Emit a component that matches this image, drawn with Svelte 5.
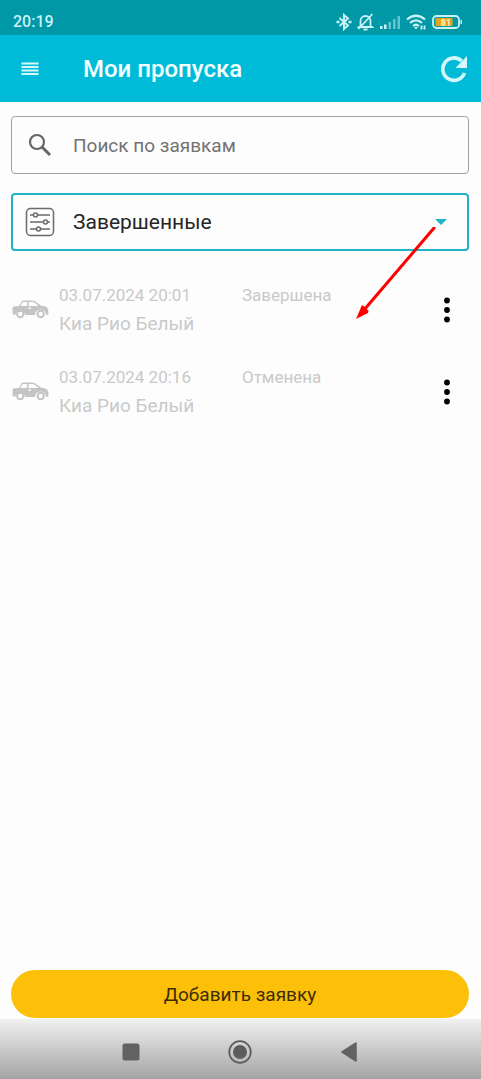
<script lang="ts">
  interface Pass {
    id: number;
    date: string;
    car: string;
    status: string;
  }

  const passes: Pass[] = [
    { id: 1, date: '03.07.2024 20:01', car: 'Киа Рио Белый', status: 'Завершена' },
    { id: 2, date: '03.07.2024 20:16', car: 'Киа Рио Белый', status: 'Отменена' },
  ];

  let query = $state('');
  let filter = $state('done');
</script>

<div class="screen">
  <div class="status-bar">
    <span class="clock">20:19</span>
    <div class="status-icons">
      <!-- Bluetooth -->
      <svg width="16" height="18" viewBox="0 0 16 18" fill="none" stroke="currentColor" stroke-width="2">
        <path d="M3.5 5 12 12.5 8 16V2l4 3.5L3.5 13" />
        <path d="M.5 9h3M12.500 9h3" stroke-width="2.400" />
      </svg>
      <!-- Muted bell -->
      <svg width="17" height="18" viewBox="0 0 17 18" fill="none" stroke="currentColor" stroke-width="1.800">
        <path d="M3.500 13V8a5 5 0 0 1 10 0v5l1.500 1H2zM6.500 16.500h4M15.500 1 1.500 16" />
      </svg>
      <!-- Mobile signal -->
      <svg width="22" height="18" viewBox="0 0 22 18" fill="currentColor">
        <path d="M1 13h2.500v3H1zM5 11.500h2.500V16H5z" />
        <path opacity=".5" d="M9.500 9H12v7H9.500zM14 6h2.500v10H14zM18.500 3H21v13h-2.500z" />
      </svg>
      <!-- Wi-Fi -->
      <svg width="21" height="18" viewBox="0 0 21 18" fill="none" stroke="currentColor" stroke-width="2.200">
        <path d="M1 6.500q9-7.500 18 0M4 9.800q6-5 12 0M7 13q3-2.500 6 0" />
        <path d="M8 14 10 16.500 12 14z" fill="currentColor" stroke="none" />
        <path d="M15.500 12.500v4M18.500 12.500v4" stroke-width="1.800" />
      </svg>
      <!-- Battery -->
      <svg class="battery" width="31" height="18" viewBox="0 0 31 18">
        <rect x="1" y="3" width="26" height="12" rx="3.500" fill="none" stroke="currentColor" stroke-width="1.800" />
        <rect x="3.500" y="5" width="17" height="8" rx="1" fill="#e8a317" />
        <path d="M28.500 7v4h1.500v-4z" fill="currentColor" />
        <text x="14" y="12.500" text-anchor="middle">81</text>
      </svg>
    </div>
  </div>

  <header class="app-bar">
    <button class="icon-button" aria-label="Меню">
      <svg width="18" height="14" viewBox="0 0 18 14" stroke="currentColor" stroke-width="1.800">
        <path d="M.5 1.500h17M.5 5h17M.5 8.500h17M.5 12h17" />
      </svg>
    </button>
    <h1>Мои пропуска</h1>
    <button class="icon-button" aria-label="Обновить">
      <svg width="28" height="28" viewBox="0 0 28 28">
        <path d="M24.500 18A11.200 11.200 0 1 1 21.700 6" fill="none" stroke="currentColor" stroke-width="3.600" />
        <path d="M27 1v12H15.500z" fill="currentColor" />
      </svg>
    </button>
  </header>

  <main>
    <label class="field search">
      <svg class="field-icon" width="30" height="30" viewBox="0 0 30 30" fill="none" stroke="#666">
        <circle cx="12" cy="12" r="7" stroke-width="2.200" />
        <path d="m17 17 8 8" stroke-width="3" />
      </svg>
      <input type="text" aria-label="Поиск по заявкам" placeholder="Поиск по заявкам" bind:value={query} />
    </label>

    <div class="filter">
      <label class="field selected">
        <svg class="field-icon" width="30" height="30" viewBox="0 0 30 30" fill="none" stroke="#6a6a6a" stroke-width="1.500">
          <rect x="1.500" y="1.500" width="27" height="27" rx="4" />
          <path d="M5 8h3m5 0h12M5 15h13m5 0h2M5 22h6m5 0h9" />
          <circle cx="10.500" cy="8" r="2" />
          <circle cx="20.500" cy="15" r="2" />
          <circle cx="13.500" cy="22" r="2" />
        </svg>
        <select aria-label="Статус заявок" bind:value={filter}>
          <option value="done">Завершенные</option>
        </select>
        <svg class="caret" width="12" height="6" viewBox="0 0 12 6">
          <path d="M0 0h12L6 6z" fill="#1fb3c8" />
        </svg>
      </label>
      <svg class="pointer" width="84" height="96" viewBox="0 0 84 96" aria-hidden="true">
        <path d="M80 1 10 83" stroke="#f00" stroke-width="3" stroke-linecap="round" />
        <path d="M2 92 8 78l3 2 3.500 4-.5 2z" fill="#f00" />
      </svg>
    </div>

    <ul class="passes">
      {#each passes as pass (pass.id)}
        <li class="pass">
          <svg class="car" width="37" height="20" viewBox="0 0 37 20">
            <path
              fill="#c4c4c4"
              fill-rule="evenodd"
              d="M7 6 9.500 1.500Q10 .5 12 .5h8q3 0 5.500 2.500L29 5.800q5 .5 6.500 2.200 1 1.500 1 6-.5 1-2.500 1A5.500 5.500 0 0 0 23 15h-9.500A5.500 5.500 0 0 0 3 15Q.5 15 .5 13V8q0-1 1-1.500zM10.500 2 8.500 6H15V2zM16.500 2v4h9.800Q23 2 20 2zM16.500 7.500V9H19V7.500z"
            />
            <circle cx="8.300" cy="14" r="3.200" fill="none" stroke="#c4c4c4" stroke-width="2" />
            <circle cx="28.700" cy="14" r="3.200" fill="none" stroke="#c4c4c4" stroke-width="2" />
          </svg>
          <div class="info">
            <time>{pass.date}</time>
            <span class="state">{pass.status}</span>
            <span class="name">{pass.car}</span>
          </div>
          <button class="icon-button more" aria-label="Действия">
            <svg width="6" height="26" viewBox="0 0 6 26" fill="#000">
              <circle cx="3" cy="3.500" r="2.900" />
              <circle cx="3" cy="13" r="2.900" />
              <circle cx="3" cy="22.500" r="2.900" />
            </svg>
          </button>
        </li>
      {/each}
    </ul>

    <button class="add">Добавить заявку</button>
  </main>

  <nav class="system-nav">
    <button class="icon-button" aria-label="Недавние">
      <svg width="24" height="24" viewBox="0 0 24 24"><rect x="3.500" y="3.500" width="17" height="17" rx="2.500" fill="#626262" /></svg>
    </button>
    <button class="icon-button" aria-label="Домой">
      <svg width="24" height="24" viewBox="0 0 24 24">
        <circle cx="12" cy="12" r="10.800" fill="none" stroke="#5c5c5c" stroke-width="1.700" />
        <circle cx="12" cy="12" r="7" fill="#5c5c5c" />
      </svg>
    </button>
    <button class="icon-button" aria-label="Назад">
      <svg width="24" height="24" viewBox="0 0 24 24"><path d="M5 12 19 3v18z" fill="#626262" stroke="#626262" stroke-width="1.500" stroke-linejoin="round" /></svg>
    </button>
  </nav>
</div>

<style>
  :global(body) {
    margin: 0;
  }

  .screen {
    display: flex;
    flex-direction: column;
    min-height: 100vh;
    background: #fdfdfd;
    color: #252525;
    font-family: Roboto, 'Noto Sans', sans-serif;
  }

  svg {
    display: block;
    flex: none;
  }

  button,
  input,
  select {
    font: inherit;
    color: inherit;
  }

  .icon-button {
    display: flex;
    align-items: center;
    justify-content: center;
    padding: 0;
    border: 0;
    background: none;
    cursor: pointer;
  }

  .status-bar {
    display: flex;
    align-items: center;
    justify-content: space-between;
    height: 35px;
    box-sizing: border-box;
    padding: 8px 18px 0 13px;
    background: #0097a7;
    color: #c9f3f6;
  }

  .clock {
    font-size: 16px;
    font-weight: 500;
  }

  .status-icons {
    display: flex;
    align-items: center;
    gap: 5px;
  }

  .battery text {
    font-size: 9px;
    font-weight: 700;
    fill: #fff2c4;
  }

  .app-bar {
    display: flex;
    align-items: center;
    height: 67px;
    padding: 0 13px 0 21px;
    background: #00bbd7;
    color: #d5f9fb;
  }

  h1 {
    flex: 1;
    margin: 0 0 0 44px;
    color: #f4ffff;
    font-size: 24px;
    font-weight: 500;
    line-height: 32px;
  }

  main {
    flex: 1;
    display: flex;
    flex-direction: column;
    padding: 14px 12px 1px 11px;
  }

  .field {
    display: flex;
    align-items: center;
    height: 58px;
    box-sizing: border-box;
    padding: 0 22px 0 13px;
    border: 1px solid #a2a2a2;
    border-radius: 4px;
  }

  .field.selected {
    padding: 0 20px 0 12px;
    border: 2px solid #20b3c8;
  }

  input,
  select {
    flex: 1;
    min-width: 0;
    height: 100%;
    padding: 0;
    margin: 0 0 0 18px;
    border: 0;
    outline: 0;
    background: none;
    appearance: none;
  }

  input {
    font-size: 19px;
  }

  input::placeholder {
    color: #727272;
    opacity: 1;
  }

  select {
    font-size: 21px;
  }

  .filter {
    position: relative;
    margin-top: 19px;
  }

  /* lies over the list, from the caret down to the rows */
  .pointer {
    position: absolute;
    top: 34px;
    right: 31px;
    pointer-events: none;
  }

  .passes {
    flex: 1;
    margin: 18px 0 0;
    padding: 0;
    list-style: none;
  }

  .pass {
    display: flex;
    align-items: center;
    height: 82px;
    padding: 0 10px 0 1px;
    color: #c9c9c9;
  }

  .info {
    flex: 1;
    display: grid;
    grid-template-columns: 183px 1fr;
    align-items: center;
    row-gap: 4px;
    margin-left: 10px;
  }

  time,
  .state {
    font-size: 17px;
    line-height: 24px;
  }

  .name {
    font-size: 19px;
    line-height: 26px;
  }

  .more {
    width: 24px;
    height: 40px;
  }

  .add {
    height: 48px;
    padding: 0;
    border: 0;
    border-radius: 24px;
    background: #fcc009;
    color: #3b2c08;
    font-size: 19px;
    cursor: pointer;
  }

  .system-nav {
    display: flex;
    justify-content: center;
    gap: 85px;
    height: 60px;
    box-sizing: border-box;
    padding: 6px 2px 0 0;
    background: linear-gradient(#f1f1f1, #a4a4a4);
  }
</style>
